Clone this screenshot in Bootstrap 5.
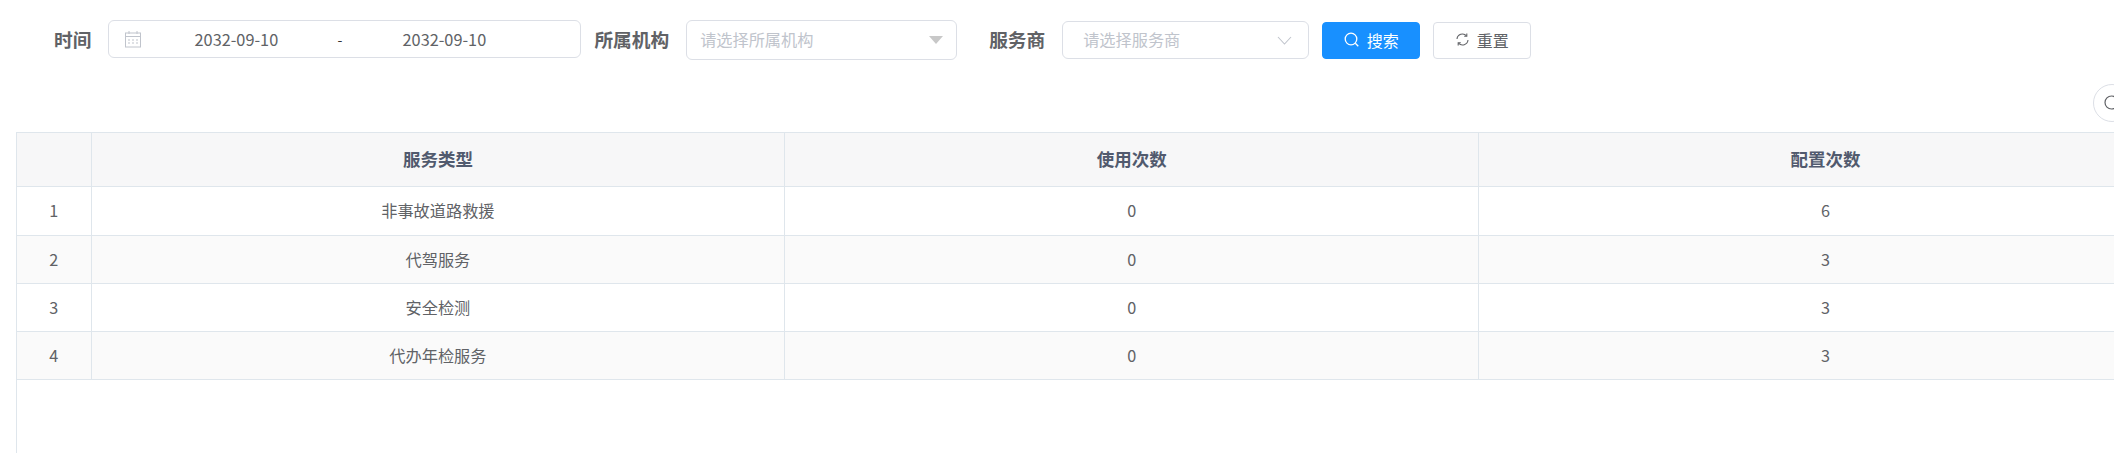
<!DOCTYPE html>
<html lang="zh">
<head>
<meta charset="utf-8">
<title>服务统计</title>
<link href="https://cdn.jsdelivr.net/npm/bootstrap@5.3.0/dist/css/bootstrap.min.css" rel="stylesheet">
<style>
html,body{height:453px;overflow:hidden;background:#fff}
body{font-family:"Noto Sans CJK SC","Noto Sans",sans-serif;font-size:16px;color:#606266}
.filter-row{padding:20px 0 0 54px;height:84px}
.flabel{font-size:18.7px;font-weight:700;color:#606266;line-height:38px;white-space:nowrap}
.field{background:#fff;border:1px solid #dcdfe6;color:#606266;line-height:1}
.date-field{width:473px;height:38px;border-radius:6px;margin-left:17px;margin-right:13px;padding-left:15px}
.date-val{width:84px;text-align:center;font-size:16.3px;color:#606266}
.date-a{margin-left:52px}
.date-sep{margin-left:57px;width:9px;text-align:center;color:#333;font-size:14px}
.date-b{margin-left:58px}
.sel1{width:271px;height:40px;border-radius:6px;margin-left:17px;margin-right:32px;padding:0 13px}
.sel2{width:247px;height:38px;border-radius:6px;margin-left:17px;margin-top:1px;padding:0 16px 0 20px}
.ph{color:#c0c4cc;font-size:16.2px;padding-bottom:2px}
.act{width:98px;height:37px;margin-top:2px;border-radius:4px;font-size:16px;padding:0 0 2px;line-height:1}
.act-go{margin-left:13px;background:#1890ff;border:1px solid #1890ff;color:#fff}
.act-reset{margin-left:13px;background:#fff;border:1px solid #dcdfe6;color:#606266}
.sheet{margin-left:16px;width:2157px}
.round-tool{width:38px;height:38px;border-radius:50%;border:1px solid #dcdfe6;background:#fff;padding:0 0 0 10px;margin-right:42px;margin-bottom:10px}
.grid-wrap{border-left:1px solid #dfe6ec;height:321px}
.data-grid{table-layout:fixed;width:100%;margin:0;border-collapse:collapse;font-size:16.2px}
.data-grid th,.data-grid td{--bs-table-bg:transparent;text-align:center;vertical-align:middle;padding:0 0 1px;color:#606266;border:0;border-right:1px solid #dfe6ec;border-bottom:1px solid #dfe6ec;line-height:1.4}
.data-grid thead tr{height:54px}
.data-grid thead th{--bs-table-bg:#f7f7f8;background:#f7f7f8;border-top:1px solid #dfe6ec;font-weight:700;color:#515a6e;font-size:17.5px;padding:0}
.data-grid tbody tr{height:48px}
.data-grid tbody tr:first-child{height:49px}
.data-grid tbody tr:nth-child(even) td{--bs-table-bg:#fafafa;background:#fafafa}
.col-idx{width:74px}
</style>
</head>
<body>
<div class="filter-row d-flex align-items-start">
  <span class="flabel">时间</span>
  <div class="field date-field d-flex align-items-center">
    <svg width="18" height="18" viewBox="0 0 18 18" fill="none" stroke="#c0c4cc" stroke-width="1"><rect x="1.500" y="3" width="15" height="14"/><path d="M1.500 6.500h15M5 1v3M13 1v3"/><path d="M4 10h2M8 10h2M12 10h2M4 13h2M8 13h2M12 13h2" stroke-width="1.200"/></svg>
    <span class="date-val date-a">2032-09-10</span>
    <span class="date-sep">-</span>
    <span class="date-val date-b">2032-09-10</span>
  </div>
  <span class="flabel">所属机构</span>
  <div class="field sel1 d-flex align-items-center justify-content-between">
    <span class="ph">请选择所属机构</span>
    <svg width="14" height="8" viewBox="0 0 14 8"><path d="M0 0h14L7 8z" fill="#c8c8c8"/></svg>
  </div>
  <span class="flabel">服务商</span>
  <div class="field sel2 d-flex align-items-center justify-content-between">
    <span class="ph">请选择服务商</span>
    <svg width="15" height="9" viewBox="0 0 15 9" fill="none" stroke="#c0c4cc" stroke-width="1.100"><path d="M1 1l6.500 7L14 1"/></svg>
  </div>
  <button type="button" class="btn act act-go d-inline-flex align-items-center justify-content-center gap-2">
    <svg width="15" height="15" viewBox="0 0 15 15" fill="none" stroke="#fff" stroke-width="1.300"><circle cx="7" cy="7" r="5.800"/><path d="M11.300 11.300l3 3"/></svg>
    <span>搜索</span>
  </button>
  <button type="button" class="btn act act-reset d-inline-flex align-items-center justify-content-center gap-2">
    <svg width="13" height="13" viewBox="0 0 13 13" fill="none" stroke="#606266" stroke-width="1.100"><path d="M1 6a5.500 5.500 0 0 1 9.500-3.200M12 7a5.500 5.500 0 0 1-9.500 3.200"/><path d="M10.800 .6v2.600H8.200M2.200 12.400V9.800h2.600"/></svg>
    <span>重置</span>
  </button>
</div>
<div class="sheet">
  <div class="d-flex justify-content-end">
    <button type="button" class="btn round-tool d-flex align-items-center">
      <svg width="16" height="16" viewBox="0 0 16 16" fill="none" stroke="#606266" stroke-width="1.200"><circle cx="7.500" cy="7.500" r="6.500"/><path d="M12.200 12.200l3 3"/></svg>
    </button>
  </div>
  <div class="grid-wrap">
    <table class="table data-grid">
      <colgroup><col class="col-idx"><col><col><col></colgroup>
      <thead>
        <tr><th></th><th>服务类型</th><th>使用次数</th><th>配置次数</th></tr>
      </thead>
      <tbody>
        <tr><td>1</td><td>非事故道路救援</td><td>0</td><td>6</td></tr>
        <tr><td>2</td><td>代驾服务</td><td>0</td><td>3</td></tr>
        <tr><td>3</td><td>安全检测</td><td>0</td><td>3</td></tr>
        <tr><td>4</td><td>代办年检服务</td><td>0</td><td>3</td></tr>
      </tbody>
    </table>
  </div>
</div>
<script src="https://cdn.jsdelivr.net/npm/bootstrap@5.3.0/dist/js/bootstrap.bundle.min.js"></script>
</body>
</html>
